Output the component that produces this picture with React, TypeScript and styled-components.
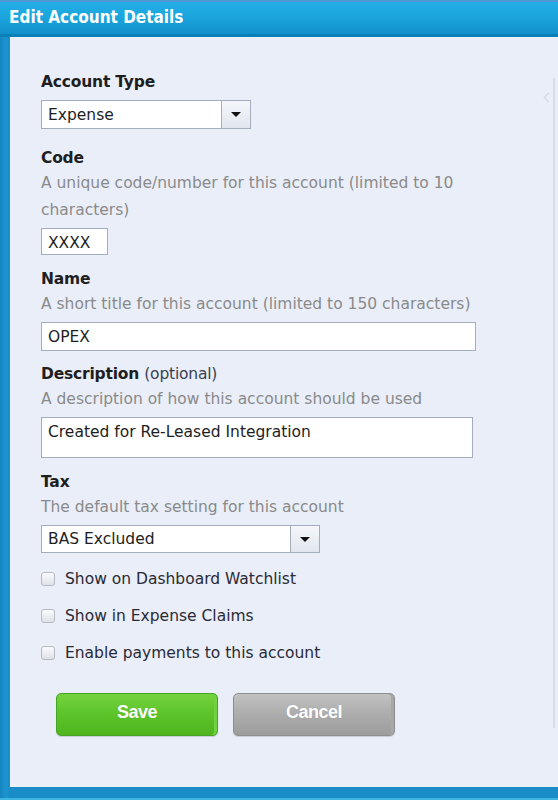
import React from "react";
import styled, { createGlobalStyle } from "styled-components";

const GlobalStyle = createGlobalStyle`
  html, body { margin: 0; padding: 0; }
  body { background: #1a8fca; }
  * { box-sizing: border-box; }
`;

const FONT = `"DejaVu Sans", Verdana, sans-serif`;

const Frame = styled.div`
  width: 558px;
  height: 800px;
  display: flex;
  flex-direction: column;
  background: linear-gradient(to right, #1586c2 0, #1c93cf 6px, #1a8cc7 10px);
  font-family: ${FONT};
`;

const TitleBar = styled.div`
  height: 37px;
  flex: none;
  display: flex;
  align-items: center;
  padding: 0 0 3px 9px;
  border-top: 2px solid #4f96d2;
  border-bottom: 3px solid #0b7fb8;
  background: linear-gradient(to bottom, #22afe5 0%, #1ba4dd 50%, #118fcb 100%);
  color: #ffffff;
  font-family: "DejaVu Sans Condensed", "DejaVu Sans", sans-serif;
  font-size: 17px;
  font-weight: bold;
`;

const Body = styled.div`
  position: relative;
  flex: 1;
  margin: 0 0 13px 10px;
  border-top: 1px solid #f4f0fb;
  background: #e9eef9;
  padding: 34px 0 0 31px;
  display: flex;
  flex-direction: column;
`;

const BottomEdge = styled.div`
  position: absolute;
  left: -10px;
  right: 0;
  bottom: -13px;
  height: 2px;
  background: #3fb6e2;
`;

const SideRail = styled.div`
  position: absolute;
  right: 3px;
  top: 40px;
  width: 2px;
  height: 650px;
  background: #d6dce8;
`;

const RailChevron = styled.div`
  position: absolute;
  right: 6px;
  top: 56px;
  width: 7px;
  height: 7px;
  border-left: 1px solid #cfd6e2;
  border-bottom: 1px solid #cfd6e2;
  transform: rotate(45deg);
`;

const Field = styled.div<{ $top: number }>`
  display: flex;
  flex-direction: column;
  align-items: flex-start;
  margin-top: ${(p) => p.$top}px;
`;

const Label = styled.div`
  font-size: 15.5px;
  line-height: 20px;
  font-weight: bold;
  color: #1e1e1e;
  letter-spacing: -0.2px;
`;

const Optional = styled.span`
  font-weight: normal;
  color: #3a3f52;
`;

const Hint = styled.div`
  margin-top: 2px;
  font-size: 15.5px;
  line-height: 27px;
  color: #8a8a8a;
  max-width: 460px;
`;

const TextBox = styled.div<{ $w: number; $h: number }>`
  margin-top: 4px;
  width: ${(p) => p.$w}px;
  height: ${(p) => p.$h}px;
  background: #ffffff;
  border: 1px solid #a3adbd;
  padding: 2px 6px 0;
  font-size: 15.5px;
  line-height: 24px;
  color: #1e1e1e;
  white-space: nowrap;
  overflow: hidden;
`;

const Select = styled.div<{ $w: number; $h: number }>`
  margin-top: 4px;
  width: ${(p) => p.$w}px;
  height: ${(p) => p.$h}px;
  display: flex;
  background: #ffffff;
  border: 1px solid #a3adbd;
`;

const SelectValue = styled.div`
  flex: 1;
  display: flex;
  align-items: center;
  padding-left: 6px;
  font-size: 15.5px;
  color: #1e1e1e;
`;

const SelectArrow = styled.div`
  width: 29px;
  flex: none;
  display: flex;
  align-items: center;
  justify-content: center;
  border-left: 1px solid #a3adbd;
  background: linear-gradient(to bottom, #f4f6fa, #e2e7ef);
  &::after {
    content: "";
    border-left: 5px solid transparent;
    border-right: 5px solid transparent;
    border-top: 5px solid #111;
  }
`;

const Checks = styled.div`
  display: flex;
  flex-direction: column;
  gap: 17px;
  margin-top: 16px;
`;

const CheckRow = styled.label`
  display: flex;
  align-items: center;
  gap: 10px;
  font-size: 15.5px;
  line-height: 20px;
  color: #2a2a36;
`;

const CheckBox = styled.span`
  width: 14px;
  height: 14px;
  border-radius: 3px;
  border: 1px solid #b5b9c2;
  background: linear-gradient(to bottom, #fbfbfc, #dfe1e6);
  flex: none;
`;

const Buttons = styled.div`
  display: flex;
  gap: 15px;
  margin: 30px 0 0 15px;
`;

const Button = styled.button<{ $variant: "save" | "cancel" }>`
  width: 162px;
  height: 43px;
  border-radius: 5px;
  font-family: "Liberation Sans", Arial, sans-serif;
  font-weight: bold;
  font-size: 18px;
  letter-spacing: -0.5px;
  color: #ffffff;
  padding: 0 0 4px;
  cursor: pointer;
  border: 1px solid ${(p) => (p.$variant === "save" ? "#46a522" : "#8e8e8e")};
  background: ${(p) =>
    p.$variant === "save"
      ? "linear-gradient(to bottom, #74d33d 0%, #5cc32a 50%, #4fb51f 100%)"
      : "linear-gradient(to bottom, #c2c2c2 0%, #acacac 50%, #9c9c9c 100%)"};
  box-shadow: inset -3px 0 0 ${(p) => (p.$variant === "save" ? "#6fd13e" : "#a8a8a8")},
    0 1px 1px rgba(0, 0, 0, 0.15);
  text-shadow: 0 0 1px rgba(0, 0, 0, 0.15);
`;

export default function App() {
  return (
    <>
      <GlobalStyle />
      <Frame>
        <TitleBar>Edit Account Details</TitleBar>
        <Body>
          <SideRail />
          <RailChevron />
          <Field $top={0}>
            <Label>Account Type</Label>
            <Select $w={210} $h={29} style={{ marginTop: 8 }}>
              <SelectValue>Expense</SelectValue>
              <SelectArrow />
            </Select>
          </Field>
          <Field $top={19}>
            <Label>Code</Label>
            <Hint>A unique code/number for this account (limited to 10 characters)</Hint>
            <TextBox $w={67} $h={27}>XXXX</TextBox>
          </Field>
          <Field $top={14}>
            <Label>Name</Label>
            <Hint>A short title for this account (limited to 150 characters)</Hint>
            <TextBox $w={435} $h={29}>OPEX</TextBox>
          </Field>
          <Field $top={13}>
            <Label>
              Description <Optional>(optional)</Optional>
            </Label>
            <Hint>A description of how this account should be used</Hint>
            <TextBox $w={432} $h={41}>Created for Re-Leased Integration</TextBox>
          </Field>
          <Field $top={14}>
            <Label>Tax</Label>
            <Hint>The default tax setting for this account</Hint>
            <Select $w={279} $h={28}>
              <SelectValue>BAS Excluded</SelectValue>
              <SelectArrow />
            </Select>
          </Field>
          <Checks>
            <CheckRow>
              <CheckBox />
              Show on Dashboard Watchlist
            </CheckRow>
            <CheckRow>
              <CheckBox />
              Show in Expense Claims
            </CheckRow>
            <CheckRow>
              <CheckBox />
              Enable payments to this account
            </CheckRow>
          </Checks>
          <Buttons>
            <Button $variant="save">Save</Button>
            <Button $variant="cancel">Cancel</Button>
          </Buttons>
          <BottomEdge />
        </Body>
      </Frame>
    </>
  );
}
